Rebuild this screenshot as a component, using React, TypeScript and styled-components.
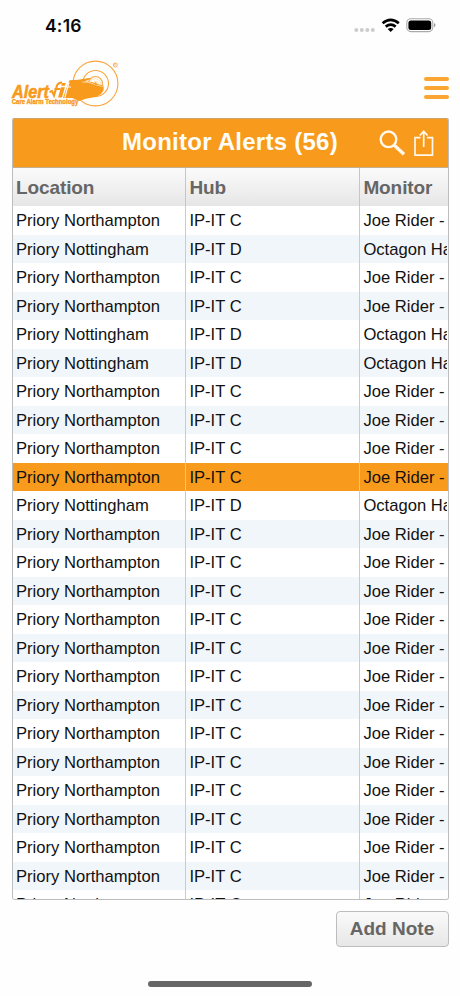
import React from "react";
import styled, { createGlobalStyle } from "styled-components";

const ORANGE = "#f89a1c";

const GlobalStyle = createGlobalStyle`
  * { box-sizing: border-box; }
  body { margin: 0; background: #fefefe; font-family: "Liberation Sans", Arial, sans-serif; }
`;

const Screen = styled.div`
  width: 460px;
  height: 996px;
  display: flex;
  flex-direction: column;
  overflow: hidden;
  background: #fefefe;
`;

const StatusBar = styled.div`
  flex: none;
  height: 50px;
  display: flex;
  justify-content: space-between;
  padding: 0 23px 0 45px;
`;

const Clock = styled.div`
  padding-top: 15px;
  font: 600 17.5px/22px Inter, sans-serif;
  letter-spacing: 0.2px;
  color: #0a0a0a;
`;

const BrandBar = styled.header`
  flex: none;
  height: 68px;
  display: flex;
  justify-content: space-between;
  padding: 6px 11px 0 8px;
`;

const MenuButton = styled.button`
  width: 26px;
  height: 24px;
  margin-top: 20px;
  padding: 1px 0.5px;
  display: flex;
  flex-direction: column;
  justify-content: space-between;
  border: 0;
  background: none;
`;

const MenuBar = styled.span`
  width: 25px;
  height: 4px;
  border-radius: 2px;
  background: #fba533;
`;

const Panel = styled.main`
  flex: none;
  width: 437px;
  height: 782px;
  margin-left: 11.5px;
  display: flex;
  flex-direction: column;
  overflow: hidden;
  border: 1px solid #bdbdbd;
  border-top-color: #c9a469;
  border-radius: 2px 2px 3px 3px;
`;

const TitleBar = styled.div`
  flex: none;
  height: 49px;
  display: flex;
  align-items: center;
  justify-content: flex-end;
  padding-right: 12.5px;
  background: ${ORANGE};
  border-bottom: 1px solid #c3b08f;
`;

const Title = styled.h1`
  flex: 1;
  margin: 0;
  padding: 0 0 2px 109.5px;
  font-size: 24px;
  line-height: 28px;
  font-weight: 700;
  letter-spacing: 0.25px;
  white-space: nowrap;
  color: #fffdf8;
`;

const Columns = styled.div`
  flex: none;
  display: grid;
  grid-template-columns: 172.9px 174px 88.1px;
`;

const HeaderRow = styled(Columns)`
  height: 38.3px;
  background: linear-gradient(#fbfbfb, #e6e6e6);
`;

const HeaderCell = styled.div`
  padding-left: 3.5px;
  font-size: 19px;
  line-height: 39px;
  font-weight: 700;
  letter-spacing: -0.1px;
  color: #666;
  white-space: nowrap;
  overflow: hidden;
  & + & { padding-left: 3px; border-left: 1px solid #c6c6c6; }
`;

const Rows = styled.div`
  flex: 1;
  min-height: 0;
  overflow: hidden;
`;

const Row = styled(Columns)<{ $selected: boolean; $shaded: boolean }>`
  height: 28.5px;
  background: ${(p) => (p.$selected ? ORANGE : p.$shaded ? "#f1f6fa" : "#fff")};
`;

const Cell = styled.div`
  padding-left: 3.5px;
  font-size: 16.6px;
  line-height: 29.2px;
  color: #111;
  white-space: nowrap;
  overflow: hidden;
  & + & { padding-left: 3px; border-left: 1px solid #cbcbcb; }
`;

const Footer = styled.footer`
  display: flex;
  justify-content: flex-end;
  padding: 11px 11.5px 0 0;
`;

const NoteButton = styled.button`
  width: 113px;
  height: 36px;
  padding: 0;
  border: 1px solid #bdbdbd;
  border-radius: 4px;
  background: linear-gradient(#fafafa, #e7e7e7);
  font: 700 19px/34px "Liberation Sans", Arial, sans-serif;
  color: #666;
`;

const HomeIndicator = styled.div`
  flex: none;
  width: 164px;
  height: 6px;
  margin: auto auto 9px 148px;
  border-radius: 3px;
  background: #666;
`;

const StatusIcons = () => (
  <svg width="84" height="50" viewBox="353 0 84 50">
    {[356.3, 361.8, 367.3, 372.8].map((x) => (
      <circle key={x} cx={x} cy="30" r="2" fill="#ccc" />
    ))}
    <g fill="none" stroke="#000" strokeWidth="2.7">
      <path d="M382.6 23.2Q390.7 16.4 398.8 23.2" />
      <path d="M385.7 26.6Q390.7 22.7 395.7 26.6" />
    </g>
    <path d="M387.7 29.1Q390.7 26.9 393.7 29.1L390.7 32.1Z" />
    <rect x="406.8" y="18.8" width="26" height="12.8" rx="4" fill="none" stroke="#aaa" strokeWidth="1.1" />
    <rect x="408.4" y="20.4" width="22.8" height="9.6" rx="2.5" />
    <path d="M434 23Q437 25 434 27.3Z" fill="#999" />
  </svg>
);

const Logo = () => (
  <svg width="116" height="58" viewBox="8 56 116 58" fontFamily="Liberation Sans, Arial, sans-serif">
    <g fill="none" stroke="#faa640">
      <circle cx="95.5" cy="83.5" r="22.4" strokeWidth="1.1" />
      <circle cx="95.5" cy="83.5" r="13" strokeWidth="1.1" />
      <circle cx="95.5" cy="83.5" r="7" strokeWidth="1.1" />
      <circle cx="115.3" cy="65" r="2" strokeWidth=".8" />
    </g>
    <text x="114.1" y="66.3" fontSize="3.5" fill={ORANGE}>R</text>
    <path
      fill={ORANGE}
      d="M69.5 80.3L78 79.7L90.5 77.8Q91.2 79.3 84 81.5L92 82Q98 84 103.5 85.5L103.7 90L101 94L96 97L87 98.5L79 101L72 98L63 98L66 89Z"
    />
    <g fill="none" stroke="#ffdca8" strokeWidth=".8">
      <path d="M89.5 83.2Q91 78.5 96 78.8Q100 79.5 101 83.5" />
      <path d="M92.3 84Q93.5 80.8 96 81.2Q98.5 81.8 98.5 84.5" />
      <path d="M82 82Q90 81.6 96 85L103 86.4" />
    </g>
    <circle cx="95.6" cy="83.4" r="1.1" fill={ORANGE} />
    <text x="12" y="97.6" fontSize="18.5" fontWeight="700" fontStyle="italic" textLength="37" lengthAdjust="spacingAndGlyphs" fill={ORANGE} stroke={ORANGE} strokeWidth=".6">Alert</text>
    <path d="M49.5 92L52 91L54 95.5L57 85.5Q58 82.7 62 82.5" fill="none" stroke={ORANGE} strokeWidth="2.1" />
    <path d="M54.5 89H60.5" stroke={ORANGE} strokeWidth="2" />
    <path d="M61 87.2H64.9L62 97.6H58ZM62 83H65.8L65 85.8H61.2Z" fill={ORANGE} />
    <path d="M69 82.5L64.8 97.6M65.5 87H71" stroke="#fff7eb" strokeWidth="1.2" />
    <text x="11.8" y="104.2" fontSize="7" fontWeight="700" textLength="66.5" lengthAdjust="spacingAndGlyphs" fill={ORANGE} stroke={ORANGE} strokeWidth=".35">Care Alarm Technology</text>
  </svg>
);

const TitleIcons = () => (
  <svg width="58" height="34" viewBox="377 126 58 34" fill="none" stroke="#fff8eb">
    <circle cx="388.5" cy="139.3" r="7.8" strokeWidth="2.4" />
    <path d="M394 145L404 154.3" strokeWidth="3.4" />
    <path d="M420.5 137.7H415V155.2H432.5V137.7H427" strokeWidth="1.7" />
    <path d="M423.7 147V131.5M419.8 135.5L423.7 131.3L427.6 135.5" strokeWidth="1.7" />
  </svg>
);

const NOTTINGHAM_ROWS = [1, 4, 5, 10];
const SELECTED_ROW = 9;
const alerts = Array.from({ length: 25 }, (_, i) =>
  NOTTINGHAM_ROWS.includes(i)
    ? { location: "Priory Nottingham", hub: "IP-IT D", monitor: "Octagon Handset" }
    : { location: "Priory Northampton", hub: "IP-IT C", monitor: "Joe Rider -" }
);

export default function App() {
  return (
    <Screen>
      <GlobalStyle />
      <StatusBar>
        <Clock>4:16</Clock>
        <StatusIcons />
      </StatusBar>
      <BrandBar>
        <Logo />
        <MenuButton aria-label="Menu">
          <MenuBar />
          <MenuBar />
          <MenuBar />
        </MenuButton>
      </BrandBar>
      <Panel>
        <TitleBar>
          <Title>Monitor Alerts (56)</Title>
          <TitleIcons />
        </TitleBar>
        <HeaderRow>
          <HeaderCell>Location</HeaderCell>
          <HeaderCell>Hub</HeaderCell>
          <HeaderCell>Monitor</HeaderCell>
        </HeaderRow>
        <Rows>
          {alerts.map((alert, i) => (
            <Row key={i} $selected={i === SELECTED_ROW} $shaded={i % 2 === 1}>
              <Cell>{alert.location}</Cell>
              <Cell>{alert.hub}</Cell>
              <Cell>{alert.monitor}</Cell>
            </Row>
          ))}
        </Rows>
      </Panel>
      <Footer>
        <NoteButton>Add Note</NoteButton>
      </Footer>
      <HomeIndicator />
    </Screen>
  );
}
